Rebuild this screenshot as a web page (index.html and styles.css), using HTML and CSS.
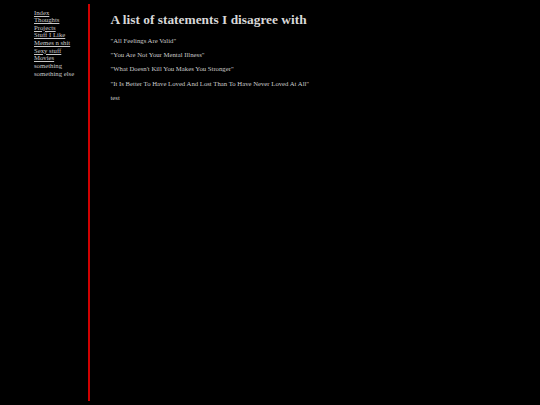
FILE: index.html
```html
<!DOCTYPE html>
<html>
<head>
<meta charset="utf-8">
<title>A list of statements I disagree with</title>
<link rel="stylesheet" href="styles.css">
</head>
<body>
<div class="page">
  <nav class="sidebar">
    <a href="#">Index</a>
    <a href="#">Thoughts</a>
    <a href="#">Projects</a>
    <a href="#">Stuff I Like</a>
    <a href="#">Memes n shit</a>
    <a href="#">Sexy stuff</a>
    <a href="#">Movies</a>
    <span>something</span>
    <span>something else</span>
  </nav>
  <main class="content">
    <h1>A list of statements I disagree with</h1>
    <p>"All Feelings Are Valid"</p>
    <p>"You Are Not Your Mental Illness"</p>
    <p>"What Doesn't Kill You Makes You Stronger"</p>
    <p>"It Is Better To Have Loved And Lost Than To Have Never Loved At All"</p>
    <p>test</p>
  </main>
</div>
</body>
</html>
```
FILE: styles.css
```css
html, body {
  margin: 0;
  padding: 0;
  background: #000;
}
body {
  font-family: "Liberation Serif", "Times New Roman", serif;
  font-size: 6.72px;
  color: #cccccc;
}
.page {
  display: flex;
  padding-top: 4px;
  height: 397px;
}
.sidebar {
  width: 54px;
  padding-left: 34px;
  padding-top: 4.5px;
  border-right: 2px solid #d00000;
  display: flex;
  flex-direction: column;
  line-height: 7.65px;
}
.sidebar a {
  color: #c8c8c8;
  text-decoration: underline;
}
.sidebar span {
  color: #c8c8c8;
}
.content {
  padding-left: 20.5px;
}
.content h1 {
  font-size: 13.4px;
  font-weight: bold;
  margin: 8px 0 8.5px;
  color: #d8d8d8;
}
.content p {
  margin: 6.7px 0;
  line-height: 7.7px;
}
```
